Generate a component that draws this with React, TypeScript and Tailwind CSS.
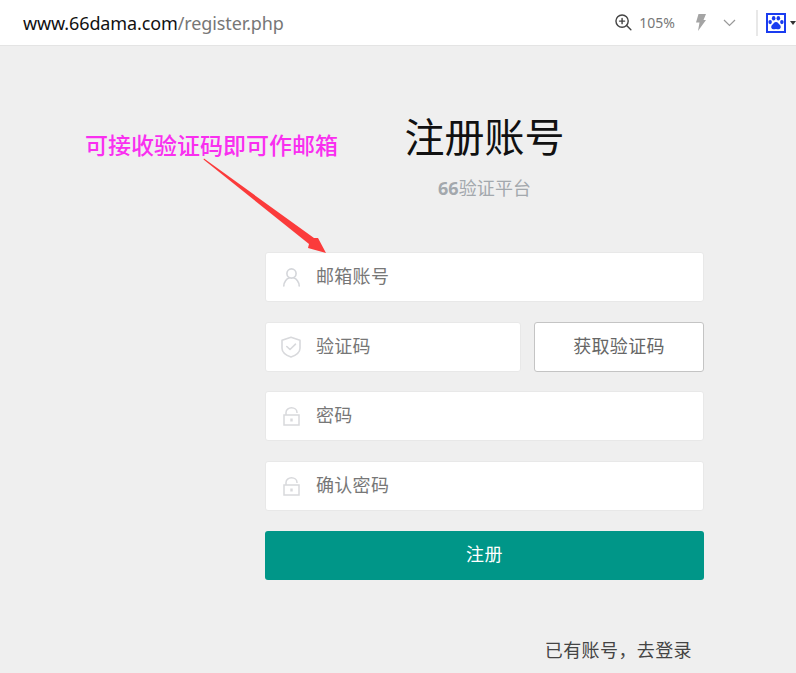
const FONT = "font-['Noto_Sans','Noto_Sans_CJK_SC',sans-serif]";

function UserIcon() {
  return (
    <svg width="20" height="20" viewBox="0 0 20 20" fill="none" stroke="#d4d6da" strokeWidth="1.6" strokeLinecap="round">
      <circle cx="10.500" cy="6.500" r="4.600" />
      <path d="M2.800 19c0-4.400 3-7.200 5.200-7.900M18.200 19c0-4.400-3-7.200-5.200-7.900" />
    </svg>
  );
}
function ShieldIcon() {
  return (
    <svg width="20" height="22" viewBox="0 0 20 22" fill="none" stroke="#d8d9dc" strokeWidth="1.6" strokeLinejoin="round" strokeLinecap="round">
      <path d="M10 1.200 19 4.200v8c0 4-4.600 7.200-9 8.800-4.400-1.600-9-4.800-9-8.800v-8z" />
      <path d="M5.800 10.500 9 13.500 14.500 8.200" />
    </svg>
  );
}
function LockIcon() {
  return (
    <svg width="17" height="19" viewBox="0 0 17 19" fill="none" stroke="#d8d9dc" strokeWidth="1.500">
      <path d="M3 8V5.500C3 2.800 5.500 .8 8.500 .8S14 2.800 14 5.500V6" />
      <rect x="1" y="8" width="15" height="10" />
      <path d="M8.500 11.500v3" strokeWidth="2.400" />
    </svg>
  );
}

function Field({ icon, label, className }: { icon: React.ReactNode; label: string; className?: string }) {
  return (
    <div className={`flex h-[50px] items-center rounded-[3px] border border-[#e8e8e8] bg-white ${className ?? ""}`}>
      <span className="flex w-[50px] justify-center">{icon}</span>
      <span className="pb-[2px] text-[18px] leading-none tracking-[0.3px] text-[#777]">{label}</span>
    </div>
  );
}

export default function App() {
  return (
    <div className={`relative h-[673px] w-[796px] overflow-hidden bg-[#efefef] ${FONT}`}>
      <header className="flex h-[46px] items-center border-b border-[#e4e4e4] bg-white pl-[23px]">
        <div className="text-[18px] leading-none tracking-[-0.12px] text-[#111]">
          www.66dama.com<span className="text-[#777]">/register.php</span>
        </div>
        <div className="ml-auto flex items-center">
          <svg width="17" height="17" viewBox="0 0 18 18" fill="none" stroke="#444" strokeWidth="1.500" strokeLinecap="round">
            <circle cx="7.500" cy="7.500" r="6.500" />
            <path d="M12.300 12.300 16.800 16.800" />
            <path d="M7.500 4.800v5.400M4.800 7.500h5.400" />
          </svg>
          <span className="ml-[7px] text-[14px] leading-none text-[#777]">105%</span>
          <svg className="ml-[21px]" width="10" height="17" viewBox="0 0 10 17" fill="#a4a4a4">
            <path d="M2.500 0H10L7.500 6H10L2 17l1.500-8.500H0z" />
          </svg>
          <svg className="ml-[17px]" width="13" height="8" viewBox="0 0 13 8" fill="none" stroke="#999" strokeWidth="1.200">
            <path d="M1 1l5.500 5.500L12 1" />
          </svg>
          <div className="ml-[20px] h-[26px] w-[2px] bg-[#e8e8e8]" />
          <div className="ml-[8px] flex h-[20px] w-[20px] items-center justify-center border-2 border-[#1a3cf0] bg-white">
            <svg width="16" height="14" viewBox="0 0 17 15" fill="#1a3cf0">
              <ellipse cx="2.200" cy="6.500" rx="1.900" ry="2.300" />
              <ellipse cx="6" cy="2.500" rx="1.900" ry="2.400" />
              <ellipse cx="11" cy="2.500" rx="1.900" ry="2.400" />
              <ellipse cx="14.800" cy="6.500" rx="1.900" ry="2.300" />
              <path d="M8.500 6.500c2 0 2.800 1.800 4 3 1.600 1.500 1.500 4.500-1 4.700-1.200.1-2-.4-3-.4s-1.800.5-3 .4c-2.500-.2-2.600-3.200-1-4.700 1.200-1.200 2-3 4-3z" />
            </svg>
          </div>
          <div className="ml-[4px] h-0 w-0 border-x-[3px] border-t-[4px] border-x-transparent border-t-[#333]" />
        </div>
      </header>

      <main className="ml-[265px] flex w-[439px] flex-col pt-[65px]">
        <h1 className="mb-[13px] text-center text-[40px] leading-[52px] text-[#111]">注册账号</h1>
        <p className="mb-[52px] text-center text-[18px] leading-[24px] tracking-[0.1px] text-[#a3a8ad]">
          <span className="font-bold">66</span>验证平台
        </p>

        <Field icon={<UserIcon />} label="邮箱账号" />
        <div className="mt-[20px] flex gap-[13px]">
          <Field icon={<ShieldIcon />} label="验证码" className="flex-1" />
          <button className="h-[50px] w-[170px] rounded-[3px] border border-[#c4c4c4] bg-white pb-[2px] text-[18px] tracking-[0.3px] text-[#666]">
            获取验证码
          </button>
        </div>
        <Field icon={<LockIcon />} label="密码" className="mt-[19px]" />
        <Field icon={<LockIcon />} label="确认密码" className="mt-[20px]" />
        <button className="mt-[20px] h-[49px] rounded-[3px] bg-[#009688] pb-[2px] text-[18px] tracking-[0.5px] text-white">注册</button>
        <div className="mt-[58px] pr-[12px] text-right text-[18px] leading-[24px] tracking-[0.4px] text-[#444]">已有账号，去登录</div>
      </main>

      <div className="absolute left-[85px] top-[129px] text-[23px] font-medium leading-[33px] text-[#f92ff0]">可接收验证码即可作邮箱</div>
      <svg className="absolute left-[200px] top-[155px]" width="130" height="102" viewBox="0 0 130 102" fill="#fb3b3b">
        <path d="M4 3.500 114 83 118 83 126 98 108 93 109 89 3.500 4.500z" />
      </svg>
    </div>
  );
}
